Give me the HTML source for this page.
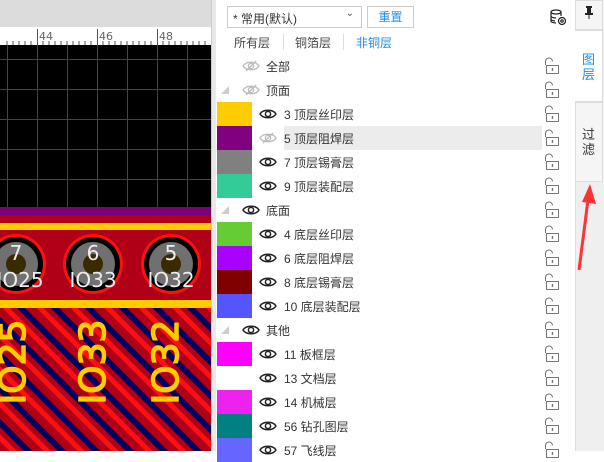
<!DOCTYPE html>
<html><head><meta charset="utf-8"><style>
*{margin:0;padding:0;box-sizing:border-box}
body{width:604px;height:451px;overflow:hidden;background:#fff;font-family:"Liberation Sans","Noto Sans CJK SC",sans-serif;font-size:12px;color:#333;position:relative}
.a{position:absolute}
.row{position:absolute;left:217px;width:340px;height:24px}
.sw{position:absolute;left:0;top:0;width:35px;height:24px}
.t{position:absolute;top:4px;font-size:12px;color:#333;white-space:nowrap}
.eye{position:absolute;top:6px}
.lock{position:absolute;left:326px;top:3px}
</style></head><body>
<svg class="a" style="left:0;top:0" width="211" height="451" viewBox="0 0 211 451">
<defs>
<pattern id="h" width="24" height="24" patternUnits="userSpaceOnUse" patternTransform="rotate(-45)">
<rect width="24" height="24" fill="#b00018"/>
<rect x="0" width="5" height="24" fill="#ff1010"/>
<rect x="10" width="6" height="24" fill="#000060"/>
</pattern>
</defs>
<rect width="211" height="27" fill="#dcdcdc"/>
<rect y="27" width="211" height="18" fill="#fff"/>
<g stroke="#555" stroke-width="1">
<path d="M7 45v-4M13 45v-4M19 45v-4M25 45v-4M31 45v-4M37.5 45V29M43 45v-4M49 45v-4M55 45v-4M61 45v-4M67 45v-4M73 45v-4M79 45v-4M85 45v-4M91 45v-4M97.5 45V29M103 45v-4M109 45v-4M115 45v-4M121 45v-4M127 45v-4M133 45v-4M139 45v-4M145 45v-4M151 45v-4M157.5 45V29M163 45v-4M169 45v-4M175 45v-4M181 45v-4M187 45v-4M193 45v-4M199 45v-4M205 45v-4"/>
</g>
<text x="39" y="40" font-size="11" fill="#666" font-family="DejaVu Sans">44</text>
<text x="99" y="40" font-size="11" fill="#666" font-family="DejaVu Sans">46</text>
<text x="159" y="40" font-size="11" fill="#666" font-family="DejaVu Sans">48</text>
<rect y="45" width="211" height="163" fill="#000"/>
<g stroke="#444" stroke-width="1">
<path d="M7.5 45V208M37.5 45V208M67.5 45V208M97.5 45V208M127.5 45V208M157.5 45V208M187.5 45V208M0 59.5H211M0 89.5H211M0 119.5H211M0 149.5H211M0 179.5H211"/>
</g>
<rect y="207" width="211" height="8" fill="#7a007a"/>
<rect y="215" width="211" height="8" fill="#b00018"/>
<rect y="223" width="211" height="7" fill="#ffcc00"/>
<rect y="230" width="211" height="71" fill="#b00018"/>
<rect y="308" width="211" height="143" fill="url(#h)"/>
<rect y="300" width="211" height="8" fill="#ffcc00"/>
<g>
<circle cx="16" cy="264" r="30" fill="#ff1010"/><circle cx="93" cy="264" r="30" fill="#ff1010"/><circle cx="171" cy="264" r="30" fill="#ff1010"/>
<circle cx="16" cy="264" r="27" fill="#000"/><circle cx="93" cy="264" r="27" fill="#000"/><circle cx="171" cy="264" r="27" fill="#000"/>
<circle cx="16" cy="264" r="22" fill="#707070"/><circle cx="93" cy="264" r="22" fill="#707070"/><circle cx="171" cy="264" r="22" fill="#707070"/>
<circle cx="16" cy="264" r="10" fill="#3a2a00"/><circle cx="93" cy="264" r="10" fill="#3a2a00"/><circle cx="171" cy="264" r="10" fill="#3a2a00"/>
</g>
<g fill="#eee" font-family="DejaVu Sans" font-size="20" text-anchor="middle">
<text x="16" y="260">7</text><text x="93" y="260">6</text><text x="171" y="260">5</text>
<text x="20" y="287">IO25</text><text x="93" y="287">IO33</text><text x="171" y="287">IO32</text>
</g>
<g fill="#ffcc00" stroke="#ffcc00" stroke-width="1.5" font-family="DejaVu Sans" font-size="36" text-anchor="middle">
<text transform="translate(25,362) rotate(-90)">IO25</text>
<text transform="translate(105,362) rotate(-90)">IO33</text>
<text transform="translate(178,362) rotate(-90)">IO32</text>
</g>
</svg>
<div class="a" style="left:211px;top:0;width:5px;height:451px;background:#e8e8e8;border-left:1px solid #ccc"></div>
<div class="a" style="left:216px;top:0;width:359px;height:451px;background:#fff"></div>
<div class="a" style="left:227px;top:6px;width:135px;height:22px;border:1px solid #ccc;padding:3px 5px;font-size:12px">* 常用(默认)<span style="position:absolute;right:7px;top:1px;font-size:10px;color:#555">⌄</span></div>
<div class="a" style="left:367px;top:6px;width:47px;height:22px;border:1px solid #ccc;color:#1e8ce6;text-align:center;line-height:20px">重置</div>
<svg class="a" style="left:549px;top:8px" width="18" height="18" viewBox="0 0 18 18" fill="none" stroke="#222" stroke-width="1.2"><ellipse cx="7" cy="4" rx="5" ry="2"/><path d="M2 4v9c0 1 2 2 5 2M2 8c0 1 2 2 5 2M2 11c0 1 2 2 4 2M12 4v4"/><circle cx="13" cy="13" r="3.5" fill="#fff"/><circle cx="13" cy="13" r="1.2"/></svg>
<div class="a" style="left:234px;top:34px;color:#444">所有层</div>
<div class="a" style="left:283px;top:34px;width:1px;height:16px;background:#ddd"></div>
<div class="a" style="left:295px;top:34px;color:#444">铜箔层</div>
<div class="a" style="left:343px;top:34px;width:1px;height:16px;background:#ddd"></div>
<div class="a" style="left:356px;top:34px;color:#1e8ce6">非铜层</div>

<div class="a" style="left:284px;top:126px;width:258px;height:24px;background:#ececec"></div>

<div id="rows"></div>
<script>
const eyeOpen='<svg width="18" height="12" viewBox="0 0 18 12"><path d="M1 6C4 1 14 1 17 6C14 11 4 11 1 6Z" fill="none" stroke="#222" stroke-width="1.5"/><circle cx="9" cy="6" r="2.6" fill="none" stroke="#222" stroke-width="1.5"/></svg>';
const eyeOff='<svg width="18" height="12" viewBox="0 0 18 12"><path d="M1 6C4 1 14 1 17 6C14 11 4 11 1 6Z" fill="none" stroke="#bbb" stroke-width="1.3"/><circle cx="9" cy="6" r="2.6" fill="none" stroke="#bbb" stroke-width="1.3"/><path d="M4 11L14 1" stroke="#bbb" stroke-width="1.3"/></svg>';
const lock='<svg width="17" height="18" viewBox="0 0 17 18" fill="none" stroke="#777" stroke-width="1"><path d="M2.5 8V4.5a3.5 3.5 0 0 1 7 0"/><rect x="3.5" y="8.5" width="12" height="8" fill="#fff"/><path d="M9.5 11v3" stroke-width="1.4"/></svg>';
const rows=[
['',0,'off','全部'],['',1,'off','顶面'],['#ffcc00',2,'on','3 顶层丝印层'],['#800080',2,'off','5 顶层阻焊层'],['#808080',2,'on','7 顶层锡膏层'],['#33cc99',2,'on','9 顶层装配层'],
['',1,'on','底面'],['#66cc33',2,'on','4 底层丝印层'],['#aa00ff',2,'on','6 底层阻焊层'],['#800000',2,'on','8 底层锡膏层'],['#5555ff',2,'on','10 底层装配层'],
['',1,'on','其他'],['#ff00ff',2,'on','11 板框层'],['',2,'on','13 文档层'],['#ee22ee',2,'on','14 机械层'],['#008080',2,'on','56 钻孔图层'],['#6666ff',2,'on','57 飞线层']];
let h='';
rows.forEach((r,i)=>{
 const top=54+i*24;
 h+=`<div class="row" style="top:${top}px">`;
 if(r[0])h+=`<div class="sw" style="background:${r[0]}"></div>`;
 if(r[1]==1)h+=`<svg class="a" style="left:4px;top:8px" width="8" height="8"><path d="M8 0V8H0Z" fill="#ccc"/></svg>`;
 const ex=r[1]==2?42:25, tx=r[1]==2?67:49;
 h+=`<div class="eye" style="left:${ex}px">${r[2]=='on'?eyeOpen:eyeOff}</div>`;
 h+=`<div class="t" style="left:${tx}px">${r[3]}</div>`;
 h+=`<div class="lock">${lock}</div></div>`;
});
document.getElementById('rows').innerHTML=h;
</script>

<div class="a" style="left:575px;top:0;width:29px;height:451px;background:#efefef;border-left:1px solid #ddd"></div>
<div class="a" style="left:575px;top:0;width:28px;height:30px;background:#f5f5f5;border:1px solid #ddd"></div>
<svg class="a" style="left:584px;top:6px" width="10" height="14" viewBox="0 0 10 14"><rect x="2" y="0" width="6" height="2" fill="#222"/><rect x="3" y="2" width="4" height="5" fill="#222"/><rect x="1" y="7" width="8" height="2" fill="#222"/><rect x="4.5" y="9" width="1" height="4" fill="#222"/></svg>
<div class="a" style="left:575px;top:30px;width:28px;height:72px;background:#fff;border:1px solid #ddd;border-left:none"></div>
<div class="a" style="left:582px;top:52px;width:14px;color:#1e8ce6;font-size:13px;line-height:15px">图层</div>
<div class="a" style="left:575px;top:102px;width:28px;height:80px;background:#f5f5f5;border:1px solid #ddd"></div>
<div class="a" style="left:582px;top:127px;width:14px;color:#333;font-size:13px;line-height:15px">过滤</div>
<svg class="a" style="left:575px;top:180px" width="29" height="95"><path d="M4 90L13 20" stroke="#ff3333" stroke-width="3"/><path d="M7 22L15 4L21 24Z" fill="#ff3333"/></svg>
</body></html>
